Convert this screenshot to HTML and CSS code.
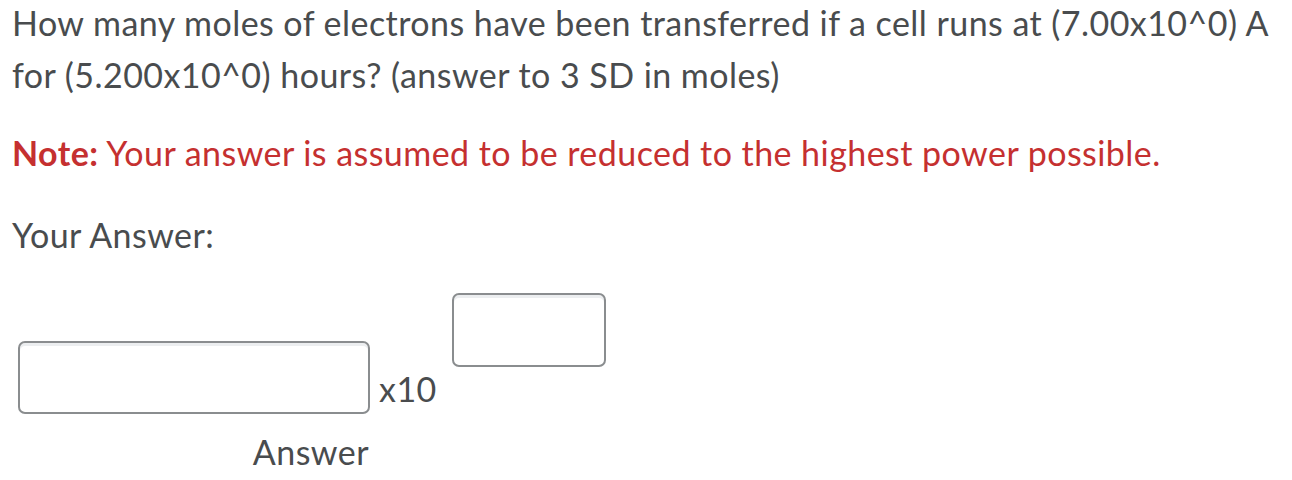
FILE: index.html
```html
<!DOCTYPE html>
<html lang="en">
<head>
<meta charset="utf-8">
<title>Question</title>
<link rel="stylesheet" href="styles.css">
</head>
<body>
<div class="question">
  <p class="prompt">How many moles of electrons have been transferred if a cell runs at (7.00x10^0) A for (5.200x10^0) hours? (answer to 3 SD in moles)</p>
  <p class="note"><strong>Note:</strong> Your answer is assumed to be reduced to the highest power possible.</p>
  <p class="label">Your Answer:</p>
  <div class="answer-row">
    <div class="mantissa">
      <input class="field field-main" type="text" aria-label="Answer">
      <span class="caption">Answer</span>
    </div>
    <span class="times">x10</span>
    <input class="field field-exp" type="text" aria-label="Exponent">
  </div>
</div>
</body>
</html>
```

FILE: styles.css
```css
html, body {
  margin: 0;
  padding: 0;
  background: #ffffff;
}

body {
  font-family: Lato, "Open Sans", sans-serif;
  font-size: 34px;
  line-height: 52px;
  letter-spacing: 0.45px;
  color: #494c4e;
}

.question {
  padding: 0 12px;
  margin-top: -3px;
}

.prompt {
  margin: 0;
  width: 1270px;
}

.note {
  margin: 26px 0 0;
  color: #c53030;
}

.note strong {
  font-weight: 700;
}

.label {
  margin: 30px 0 0;
}

.answer-row {
  display: flex;
  align-items: flex-start;
  margin-top: 32px;
}

.mantissa {
  display: flex;
  flex-direction: column;
  align-items: flex-end;
  margin-left: 6px;
  margin-top: 48px;
}

.field {
  box-sizing: border-box;
  height: 73px;
  margin: 0;
  padding: 0 10px;
  border: 2px solid #8a8d8f;
  border-radius: 7px;
  background: #ffffff;
  box-shadow: inset 0 3px 0 rgba(181, 189, 194, 0.25);
  font: inherit;
  color: inherit;
  outline: none;
}

.field-main {
  width: 352px;
}

.caption {
  margin-top: 12px;
  margin-right: 1px;
}

.times {
  margin-left: 9px;
  margin-top: 70px;
}

.field-exp {
  width: 154px;
  height: 74px;
  margin-left: 15px;
}
```
